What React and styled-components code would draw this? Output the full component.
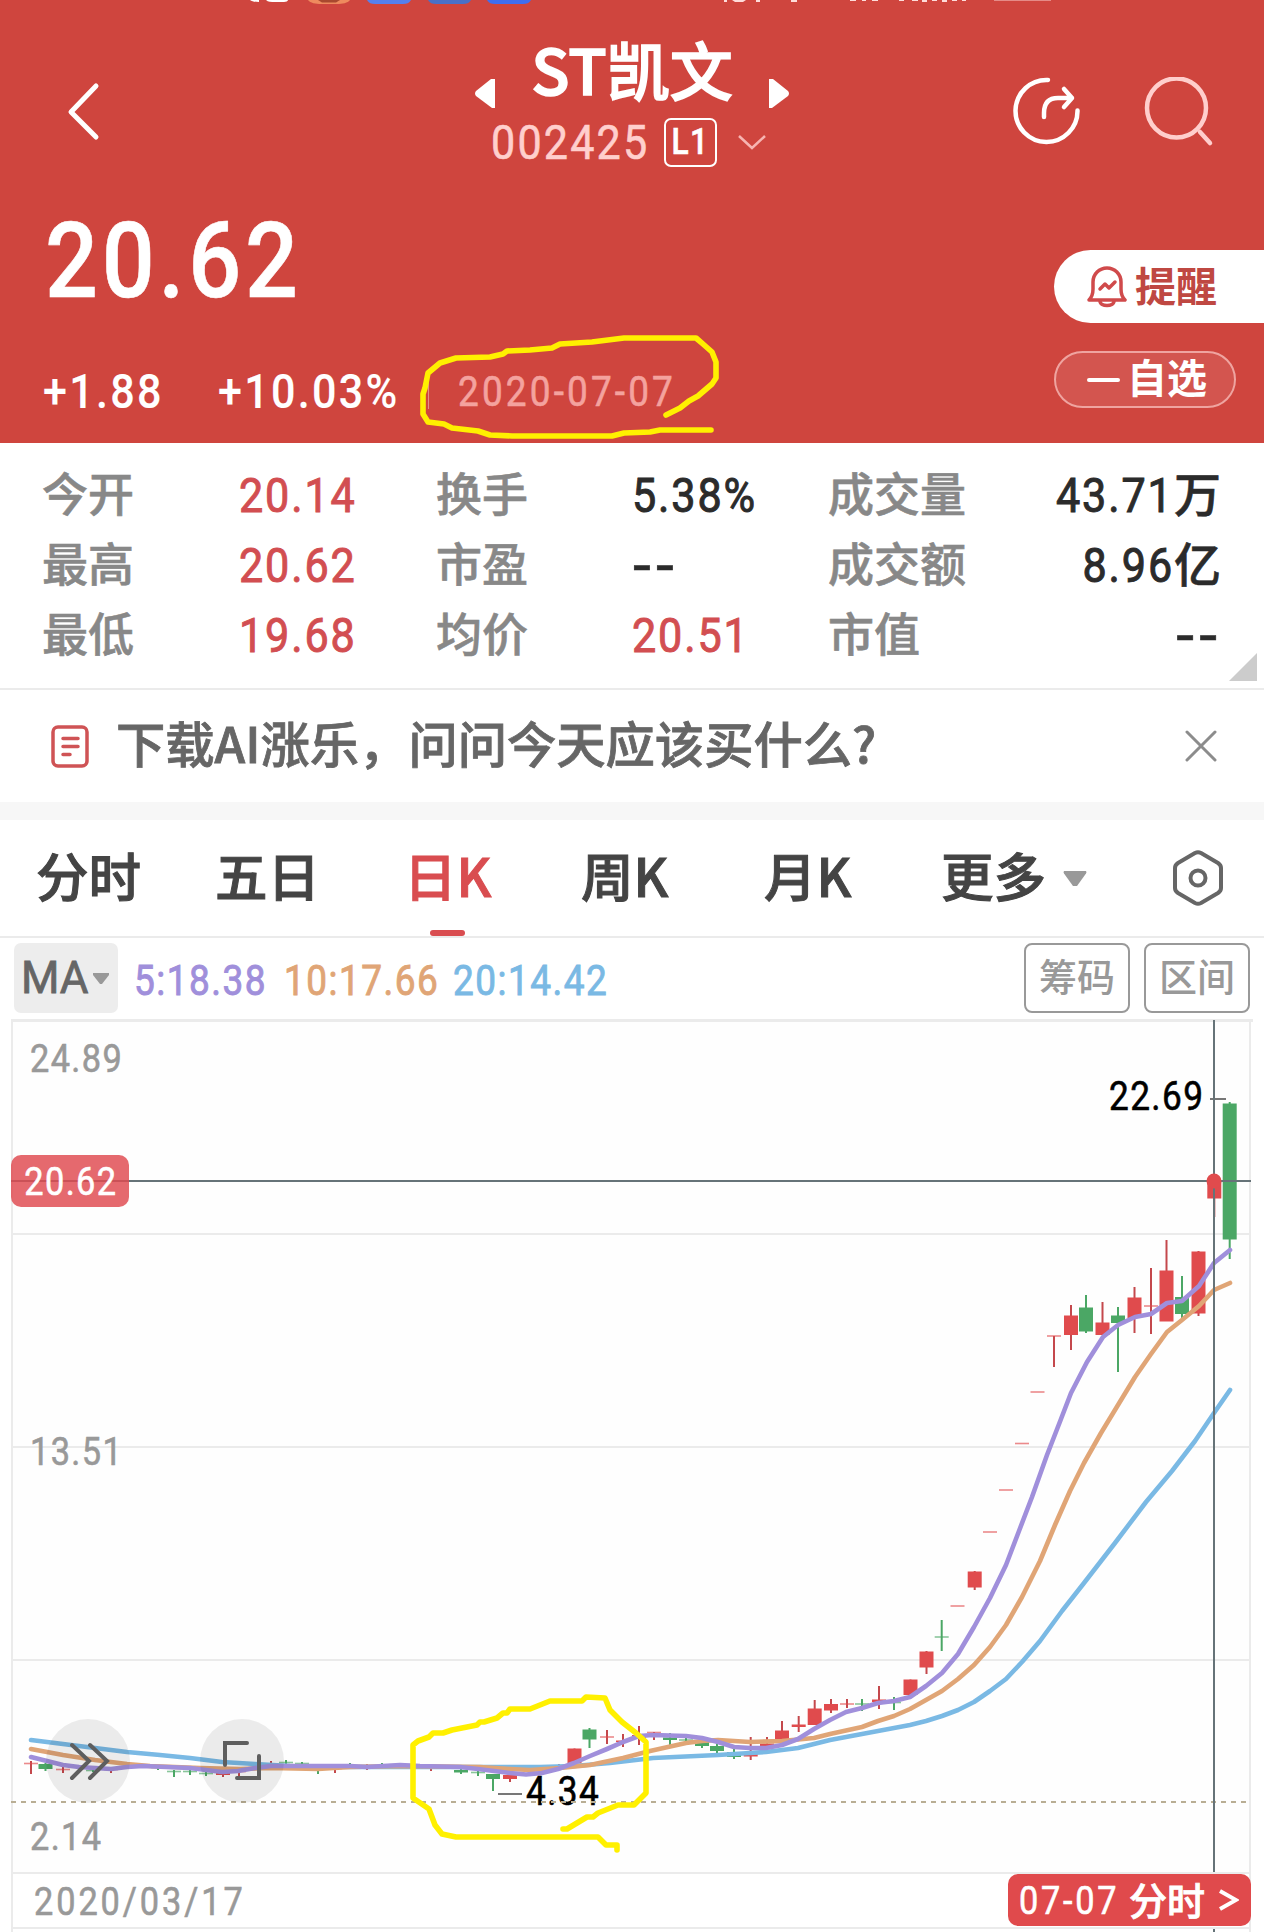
import styled, { createGlobalStyle } from "styled-components";

const GlobalStyle = createGlobalStyle`
    * {
        box-sizing: border-box;
    }
    body {
        margin: 0;
        background: #fff;
        font-family: "Noto Sans CJK SC", "Noto Sans", sans-serif;
    }
    svg {
        display: block;
        flex: none;
    }
`;

const RED = "#e04b4d";
const GREEN = "#4ba765";

const stats = [
    [
        { label: "今开", value: "20.14", up: true },
        { label: "换手", value: "5.38%" },
        { label: "成交量", value: "43.71", unit: "万" },
    ],
    [
        { label: "最高", value: "20.62", up: true },
        { label: "市盈", value: "--" },
        { label: "成交额", value: "8.96", unit: "亿" },
    ],
    [
        { label: "最低", value: "19.68", up: true },
        { label: "均价", value: "20.51", up: true },
        { label: "市值", value: "--" },
    ],
];

const tabs = ["分时", "五日", "日K", "周K", "月K", "更多"];

// x, body top, body bottom, wick top, wick bottom, 1 = up
const candles = [
    [31, 1763, 1764, 1761, 1774, 1],
    [45.5, 1764, 1769, 1763, 1771, 0],
    [63, 1769, 1770, 1767, 1773, 1],
    [93, 1770, 1771, 1769, 1772, 0],
    [111, 1769, 1769, 1768, 1773, 1],
    [158, 1767, 1767, 1767, 1770, 0],
    [174, 1771, 1772, 1770, 1777, 0],
    [190, 1771, 1772, 1770, 1775, 0],
    [206, 1773, 1774, 1772, 1776, 0],
    [223, 1773, 1775, 1772, 1777, 1],
    [239, 1771, 1772, 1771, 1776, 1],
    [271, 1765, 1766, 1761, 1766, 1],
    [286, 1762, 1763, 1760, 1764, 0],
    [302, 1763, 1764, 1762, 1765, 0],
    [318, 1768, 1769, 1769, 1774, 0],
    [335, 1768, 1769, 1769, 1773, 1],
    [350, 1766, 1767, 1763, 1767, 0],
    [367, 1766, 1767, 1764, 1770, 1],
    [382, 1766, 1767, 1763, 1767, 0],
    [431, 1767, 1768, 1767, 1771, 1],
    [461, 1770, 1772.5, 1769, 1774, 0],
    [478, 1772, 1773, 1771, 1776, 0],
    [493, 1774, 1779, 1774, 1791, 0],
    [510, 1775, 1779, 1774, 1782, 1],
    [559, 1767, 1768, 1764, 1768, 1],
    [574.5, 1748.5, 1763.5, 1748.5, 1763.5, 1],
    [589.5, 1729.5, 1739.5, 1728, 1748, 0],
    [607, 1736.5, 1737.5, 1730, 1744, 1],
    [623, 1740.5, 1742, 1734, 1747, 1],
    [639, 1735, 1739, 1726, 1745, 1],
    [654, 1732, 1733, 1732, 1740, 1],
    [670, 1737.5, 1740, 1733, 1745, 0],
    [686, 1739.5, 1740.5, 1738, 1742, 0],
    [702, 1742, 1746, 1742, 1748, 0],
    [717, 1746, 1751, 1744, 1754, 0],
    [734, 1752, 1757, 1749, 1759, 0],
    [750.7, 1754, 1756.5, 1737, 1760, 1],
    [767, 1743.5, 1746, 1737, 1747, 1],
    [782, 1730.5, 1740, 1721, 1740, 1],
    [798.7, 1724.5, 1727, 1716, 1732, 1],
    [814.7, 1708.5, 1725, 1700, 1725, 1],
    [831, 1704, 1710.5, 1699, 1713, 1],
    [847, 1703.5, 1704.5, 1699, 1708, 1],
    [862, 1703.5, 1704.5, 1699, 1711, 0],
    [879, 1699.5, 1702, 1686, 1709, 1],
    [894, 1702, 1703, 1697, 1710, 0],
    [910.5, 1679.5, 1695, 1679.5, 1695, 1],
    [926.5, 1651.5, 1667.5, 1651, 1674, 1],
    [941.7, 1636.5, 1637.5, 1620, 1651, 0],
    [957.5, 1605.5, 1606.5, 1606, 1606, 1],
    [974.7, 1571.5, 1587.5, 1571, 1590, 1],
    [990, 1531.5, 1532.5, 1532, 1532, 1],
    [1006, 1489.5, 1490.5, 1490, 1490, 1],
    [1022, 1443, 1444, 1443, 1443, 1],
    [1037.5, 1391.5, 1392.5, 1392, 1392, 1],
    [1054, 1335.5, 1336.5, 1336, 1367, 1],
    [1071, 1315.5, 1335, 1305, 1350, 1],
    [1086, 1307.5, 1331.5, 1295, 1333, 0],
    [1102.5, 1322.5, 1335, 1302, 1335, 1],
    [1118, 1315.5, 1323, 1307, 1372, 0],
    [1134.5, 1297.5, 1318, 1287, 1333, 1],
    [1151, 1305.5, 1306.5, 1268, 1334, 1],
    [1166.5, 1270.5, 1321.5, 1240, 1321, 1],
    [1182, 1297, 1314, 1276, 1318, 0],
    [1198.5, 1251.5, 1313.5, 1251, 1316, 1],
    [1214.3, 1180, 1198.5, 1180, 1217, 1],
    [1229.7, 1103.5, 1239.5, 1102, 1259, 0],
];

const averages = [
    {
        color: "#7ab9e4",
        points:
            "31,1740 63,1744 95,1748 127,1752 160,1755 190,1758 222,1762 255,1764 290,1766 350,1767 400,1767 480,1767 540,1767 574,1766 610,1763 653,1758 718,1755 750,1753 766,1752 798,1748 814,1744 830,1740 862,1734 910,1725 926,1721 942,1716 958,1710 974,1702 990,1691 1006,1679 1022,1662 1040,1641 1062,1611 1084,1583 1115,1543 1146,1502 1172,1471 1195,1441 1214,1413 1230,1390",
    },
    {
        color: "#e0a576",
        points:
            "31,1749 47,1752 63,1755 95,1760 127,1764 150,1766 200,1768 240,1769 271,1768 318,1769 350,1767 400,1766 480,1767 510,1769 530,1770 560,1768 590,1765 623,1758 650,1751 686,1743 702,1741 718,1740 750,1742 782,1741 814,1738 830,1734 862,1727 878,1721 894,1716 910,1709 926,1700 942,1691 958,1679 974,1665 990,1647 1006,1625 1022,1597 1040,1561 1055,1525 1070,1491 1084,1463 1101,1433 1118,1405 1135,1377 1151,1354 1167,1332 1182,1320 1199,1306 1214,1290 1230,1283",
    },
    {
        color: "#a08fdb",
        points:
            "31,1757 47,1761 63,1765 79,1767 95,1768 111,1769 127,1767 143,1766 190,1768 206,1770 222,1772 238,1771 255,1768 271,1766 300,1766 350,1766 367,1767 383,1766 400,1765 420,1766 460,1767 478,1769 494,1771 510,1773 526,1774.5 542,1773 558,1769 574,1763 590,1756 607,1749 623,1742 639,1736 653,1735 686,1736 702,1738 718,1742 734,1747 750,1748 766,1748 782,1745 798,1739 814,1729 830,1720 846,1712 862,1708 878,1703 894,1701 910,1697 926,1686 942,1673 958,1654 974,1627 990,1598 1006,1565 1019,1531 1032,1497 1047,1455 1061,1419 1071,1393 1087,1362 1103,1337 1118,1325 1135,1317 1151,1314 1167,1303 1182,1301 1199,1286 1214,1263 1230,1250",
    },
];

const ChartText = ({ x, y, size = 39, fill = "#999", spacing, children }) => (
    <ChartLabel transform={`translate(${x} ${y}) scale(0.88 1)`} fontSize={size} fill={fill} stroke={fill} $spacing={spacing}>
        {children}
    </ChartLabel>
);

const Candle = ({ x, top, bottom, high, low, up }) => {
    const color = up ? RED : GREEN;
    const flat = bottom - top <= 1;
    return (
        <g>
            {low > high && (
                <line x1={x} x2={x} y1={high} y2={low} stroke={up ? "#c4484c" : GREEN} strokeWidth="2" />
            )}
            <rect
                x={x - 7}
                y={flat ? top - 0.3 : top}
                width="14"
                height={flat ? 1.6 : bottom - top}
                fill={color}
                opacity={flat ? 0.65 : 1}
            />
        </g>
    );
};

const KLineChart = () => (
    <svg width="1264" height="913" viewBox="0 1019 1264 913">
        <rect x="12" y="1020" width="1239" height="852" fill="#fefefe" />
        <g stroke="#ebebeb" strokeWidth="2">
            <line x1="11" x2="1253" y1="1020.5" y2="1020.5" strokeWidth="3" />
            <line x1="12" x2="12" y1="1019" y2="1932" />
            <line x1="1250" x2="1250" y1="1019" y2="1932" />
            <line x1="12" x2="1250" y1="1234" y2="1234" />
            <line x1="12" x2="1250" y1="1447" y2="1447" />
            <line x1="12" x2="1250" y1="1660" y2="1660" />
            <line x1="12" x2="1250" y1="1873" y2="1873" />
            <line x1="12" x2="1250" y1="1928" y2="1928" />
        </g>
        <ChartText x={30} y={1072}>24.89</ChartText>
        <ChartText x={30} y={1465}>13.51</ChartText>
        <ChartText x={30} y={1850}>2.14</ChartText>
        <ChartText x={34} y={1915} spacing="0.085em">2020/03/17</ChartText>
        {candles.map(([x, top, bottom, high, low, up]) => (
            <Candle key={x} x={x} top={top} bottom={bottom} high={high} low={low} up={up} />
        ))}
        {averages.map((line) => (
            <polyline
                key={line.color}
                points={line.points}
                fill="none"
                stroke={line.color}
                strokeWidth="4.600"
                strokeLinecap="round"
                strokeLinejoin="round"
            />
        ))}
        <ChartText x={1109} y={1110} fill="#000" size={40}>22.69</ChartText>
        <line x1="1210" x2="1226" y1="1099" y2="1099" stroke="#777" strokeWidth="2" />
        <ChartText x={526} y={1805} fill="#000" size={40}>4.34</ChartText>
        <line x1="498" x2="522" y1="1794" y2="1794" stroke="#777" strokeWidth="2" />
        <line x1="11" x2="1251" y1="1802" y2="1802" stroke="#b9ae94" strokeWidth="2" strokeDasharray="5 5" />
        <line x1="11" x2="1251" y1="1181" y2="1181" stroke="#667378" strokeWidth="2" />
        <line x1="1214" x2="1214" y1="1020" y2="1872" stroke="#667378" strokeWidth="2" />
        <line x1="1214" x2="1214" y1="1929" y2="1932" stroke="#667378" strokeWidth="2" />
        <circle cx="1214" cy="1181" r="7.500" fill={RED} />
    </svg>
);

const App = () => (
    <Page>
        <GlobalStyle />
        <Header>
            <StatusStrip>
                <svg width="1264" height="4" viewBox="0 0 1264 4">
                    <path d="M250 0c2 1.500 5 2 9 2V0zM266 0c2 2 5 2 9 2h9c2 0 4-1 4-2z" fill="#fff" />
                    <path d="M308 0c2 3 8 4 13 4h16c5 0 11-1 13-4z" fill="#ee8a5e" />
                    <path d="M318 0h22l-4 2.500h-14z" fill="#a8482f" />
                    <path d="M367 0c2 3 4 4 8 4h28c4 0 6-1 8-4z" fill="#5580ee" />
                    <path d="M428 0c2 3 4 4 8 4h27c4 0 6-1 8-4z" fill="#4a70c8" />
                    <path d="M487 0c2 3 4 4 8 4h28c4 0 6-1 8-4z" fill="#3f6ef0" />
                    <path
                        d="M724 0h3v2h-3zM732 0h14l-3 2h-8zM756 0h4v2h-4zM791 0h6v2h-6zM850 0h6v1h-6zM862 0h4v1h-4zM872 0h6v1h-6zM899 0h5v1h-5zM912 0h6v1h-6zM922 0h5v2h-5zM932 0h5v1h-5zM942 0h5v2h-5zM952 0h5v1h-5zM962 0h4v1h-4z"
                        fill="#ffdcda"
                    />
                    <rect x="994" y="0" width="57" height="1" fill="#e58b87" />
                </svg>
            </StatusStrip>
            <TopBar>
                <BackButton>
                    <svg width="36" height="60" viewBox="0 0 36 60" fill="none" stroke="#fff" strokeWidth="5" strokeLinecap="round" strokeLinejoin="round">
                        <path d="M30 4 5 30l25 25" />
                    </svg>
                </BackButton>
                <TitleBlock>
                    <TitleRow>
                        <Arrow width="20" height="29" viewBox="0 0 20 29">
                            <path d="M20 0v29h-3L1 17q-2-2.500 0-5L16 0z" fill="#fff" />
                        </Arrow>
                        <Title>ST凯文</Title>
                        <Arrow width="20" height="29" viewBox="0 0 20 29">
                            <path d="M0 0v29h3l16-12q2-2.500 0-5L4 0z" fill="#fff" />
                        </Arrow>
                    </TitleRow>
                    <CodeRow>
                        <Code>002425</Code>
                        <Level>
                            <Num $size={36} $weight={500} $origin="center">L1</Num>
                        </Level>
                        <svg width="28" height="16" viewBox="0 0 28 16" fill="none" stroke="#f7b4b1" strokeWidth="2.500">
                            <path d="m1 2 13 12L27 2" />
                        </svg>
                    </CodeRow>
                </TitleBlock>
                <TopActions>
                    <svg width="70" height="70" viewBox="0 0 70 70" fill="none" stroke="#fff" strokeWidth="4.500" strokeLinecap="round" strokeLinejoin="round">
                        <path d="M36 3A31 31 0 1 0 65.500 33.500" />
                        <path d="M32 40v-4q0-15 14-15h14M52 12l8 9-8 9" />
                    </svg>
                    <svg width="72" height="72" viewBox="0 0 72 72" fill="none" stroke="#ffcecc" strokeWidth="4.500" strokeLinecap="round">
                        <circle cx="32.500" cy="31" r="29.500" />
                        <path d="m56 55 10 11" />
                    </svg>
                </TopActions>
            </TopBar>
            <Quote>
                <div>
                    <Price>
                        <Num $size={106} $weight={500}>20.62</Num>
                    </Price>
                    <ChangeRow>
                        <Change $width={175}>+1.88</Change>
                        <Change $width={210}>+10.03%</Change>
                        <DateCell>
                            <Num $size={42} $color="#f4a29e" $spacing="0.085em">2020-07-07</Num>
                        </DateCell>
                    </ChangeRow>
                </div>
                <QuoteActions>
                    <RemindButton>
                        <svg width="40" height="42" viewBox="0 0 40 42" fill="none" stroke="#d04a4b" strokeWidth="3.500" strokeLinejoin="round" strokeLinecap="round">
                            <path d="M2 34c3-3 4-6 4-11v-7a14 14 0 0 1 28 0v7c0 5 1 8 4 11z" />
                            <path d="M13 35c0 6 14 6 14 0M13 23l5-5 4 4 6-6" />
                        </svg>
                        提醒
                    </RemindButton>
                    <WatchButton>
                        <Minus />
                        自选
                    </WatchButton>
                </QuoteActions>
            </Quote>
        </Header>
        <Stats>
            {stats.map((row) => (
                <StatsRow key={row[0].label}>
                    {row.map((cell, i) => [
                        <Label key={cell.label}>{cell.label}</Label>,
                        <Value key={cell.label + "v"} $right={i === 2}>
                            {cell.value === "--" ? (
                                <Dashes $origin={i === 2 ? "right" : "left"}>{cell.value}</Dashes>
                            ) : (
                                <Num
                                    $size={49}
                                    $color={cell.up ? "#d24e51" : "#2b2b2b"}
                                    $origin={i === 2 ? "right" : "left"}
                                    $spacing="0.043em"
                                    $stroke={1}
                                >
                                    {cell.value}
                                </Num>
                            )}
                            {cell.unit}
                        </Value>,
                    ])}
                </StatsRow>
            ))}
            <Corner />
        </Stats>
        <Banner>
            <svg width="38" height="43" viewBox="0 0 38 43" fill="none" stroke="#cf5355" strokeWidth="3.500" strokeLinecap="round">
                <rect x="2" y="2" width="34" height="39" rx="5" />
                <path d="M12 13.500h15M12 21.500h15M12 29.500h7" />
            </svg>
            <BannerText>下载AI涨乐，问问今天应该买什么?</BannerText>
            <svg width="32" height="32" viewBox="0 0 32 32" stroke="#8c8c8c" strokeWidth="3" strokeLinecap="round">
                <path d="m2 2 28 28M30 2 2 30" />
            </svg>
        </Banner>
        <Tabs>
            {tabs.map((tab) => (
                <Tab key={tab} $active={tab === "日K"}>
                    {tab}
                    {tab === "更多" && (
                        <svg width="24" height="16" viewBox="0 0 24 16">
                            <path d="M1 0h22q1 1 0 2.500L14 15h-4L1 2.500Q0 1 1 0z" fill="#999" />
                        </svg>
                    )}
                </Tab>
            ))}
            <svg width="50" height="56" viewBox="0 0 50 56" fill="none" stroke="#666" strokeWidth="4" strokeLinejoin="round">
                <path d="M22 3q3-1.500 6 0l17 10q3 2 3 5v20q0 3-3 5L28 53q-3 1.500-6 0L5 43q-3-2-3-5V18q0-3 3-5z" />
                <circle cx="25" cy="28" r="7.500" />
            </svg>
        </Tabs>
        <IndicatorBar>
            <IndicatorSelect>
                MA
                <svg width="16" height="11" viewBox="0 0 16 11">
                    <path d="M0 0h16v2L9 11H7L0 2z" fill="#999" />
                </svg>
            </IndicatorSelect>
            <Average $width={150} $color="#a08fdb">5:18.38</Average>
            <Average $width={169} $color="#e0a576">10:17.66</Average>
            <Average $width={170} $color="#7ab9e4">20:14.42</Average>
            <RangeButtons>
                <RangeButton>筹码</RangeButton>
                <RangeButton>区间</RangeButton>
            </RangeButtons>
        </IndicatorBar>
        <ChartArea>
            <KLineChart />
            <PriceTag>
                <Num $size={39} $origin="center">20.62</Num>
            </PriceTag>
            <RoundButton $left={46}>
                <svg width="84" height="84" viewBox="46 1719 84 84" fill="none" stroke="#5e5e5e" strokeWidth="4" strokeLinecap="round">
                    <path d="m72 1745 17 16-17 17M90 1745l17 16-17 17" />
                </svg>
            </RoundButton>
            <RoundButton $left={200}>
                <svg width="84" height="84" viewBox="200 1719 84 84" fill="none" stroke="#5e5e5e" strokeWidth="4" strokeLinecap="round">
                    <path d="M225 1765v-22h22M259 1756v22h-22" />
                </svg>
            </RoundButton>
            <DayBadge>
                <Num $size={39} $spacing="0.08em">07-07</Num>
                <BadgeText>分时</BadgeText>
                <svg width="20" height="22" viewBox="0 0 20 22" fill="none" stroke="#fff" strokeWidth="4">
                    <path d="m1 2 16 9-16 9" />
                </svg>
            </DayBadge>
        </ChartArea>
        <Marks width="1264" height="1932" viewBox="0 0 1264 1932">
            <polyline points="666,415 680,408 689,401 698,396 712,384 716,378 716,362 712,352 703,344 696,338 624,338 592,342 560,344 552,348 530,350 507,351 503,354 490,357 456,358 440,363 428,373 425,388 423,394 423,414 428,422 444,424 452,428 478,431 490,435 512,436 612,436 624,433 650,432 660,430 711,430" />
            <polyline points="563,1829 567,1829 587,1817 593,1817 598,1813 618,1805 634,1805 646,1793 646,1742 636,1733 622,1722 610,1710 605,1698 586,1697 582,1701 550,1701 530,1709 510,1709 507,1713 503,1713 497,1718 484,1722 480,1722 477,1725 452,1730 443,1733 433,1733 429,1737 418,1741 413,1745 413,1798 429,1809 435,1825 442,1834 456,1837 598,1837 606,1845 617,1845 617,1850" />
        </Marks>
    </Page>
);

const Page = styled.div`
    position: relative;
    display: flex;
    flex-direction: column;
    width: 1264px;
    height: 1932px;
    overflow: hidden;
    background: #fff;
`;
// condensed figures, a bit tighter than the family's own width
const Num = styled.span`
    display: inline-block;
    font-family: Roboto, "Noto Sans", sans-serif;
    font-size: ${(p) => p.$size}px;
    font-weight: ${(p) => p.$weight || 400};
    line-height: 1;
    letter-spacing: ${(p) => p.$spacing || "0.04em"};
    color: ${(p) => p.$color || "inherit"};
    white-space: nowrap;
    transform: scaleX(0.88);
    transform-origin: ${(p) => p.$origin || "left"};
    -webkit-text-stroke: ${(p) => p.$stroke || 0.6}px currentColor;
`;
const Dashes = styled(Num).attrs({ $size: 49, $weight: 500, $spacing: "0.05em" })`
    transform: scaleX(1.2);
`;
const ChartLabel = styled.text`
    font-family: Roboto, "Noto Sans", sans-serif;
    letter-spacing: ${(p) => p.$spacing || "0.04em"};
    stroke-width: 0.6px;
`;
const Header = styled.header`
    height: 443px;
    background: #cf453e;
    color: #fff;
`;
const StatusStrip = styled.div`
    height: 33px;
`;
const TopBar = styled.div`
    display: flex;
    justify-content: space-between;
    height: 150px;
`;
const BackButton = styled.div`
    width: 475px;
    padding: 49px 0 0 66px;
`;
const TitleBlock = styled.div`
    width: 314px;
`;
const TitleRow = styled.div`
    display: flex;
    justify-content: space-between;
    height: 70px;
`;
const Arrow = styled.svg`
    margin-top: 46px;
`;
const Title = styled.h1`
    margin: 0;
    font-size: 63px;
    font-weight: 500;
    line-height: 70px;
    white-space: nowrap;
    -webkit-text-stroke: 1.6px currentColor;
`;
const CodeRow = styled.div`
    display: flex;
    align-items: center;
    height: 78px;
    padding-left: 16px;
`;
const Code = styled(Num).attrs({ $size: 49, $color: "#ffcfcd", $spacing: "0.05em" })`
    width: 173px;
`;
const Level = styled.div`
    display: flex;
    align-items: center;
    justify-content: center;
    width: 53px;
    height: 49px;
    margin-right: 21px;
    border: 2px solid #fff;
    border-radius: 7px;
`;
const TopActions = styled.div`
    display: flex;
    gap: 62px;
    width: 475px;
    padding: 44px 0 0 223px;
`;
const Quote = styled.div`
    display: flex;
    justify-content: space-between;
    height: 260px;
`;
const Price = styled.div`
    display: flex;
    align-items: center;
    height: 156px;
    padding-left: 45px;
`;
const ChangeRow = styled.div`
    display: flex;
    align-items: center;
    height: 104px;
    padding-left: 43px;
`;
const Change = styled(Num).attrs({ $size: 49, $weight: 500, $spacing: "0.052em", $stroke: 0.1 })`
    width: ${(p) => p.$width}px;
`;
const DateCell = styled.div`
    display: flex;
    align-items: center;
    height: 36px;
    padding: 2px 0 0 29px;
    border-left: 1px solid #e58b87;
`;
const QuoteActions = styled.div`
    display: flex;
    flex-direction: column;
    gap: 28px;
    width: 210px;
    padding-top: 67px;
`;
const RemindButton = styled.div`
    display: flex;
    align-items: center;
    gap: 8px;
    height: 73px;
    padding: 0 0 5px 33px;
    border-radius: 37px 0 0 37px;
    background: #fff;
    color: #bf4842;
    font-size: 41px;
    font-weight: 700;
    line-height: 60px;
    svg {
        margin-top: 6px;
    }
`;
const WatchButton = styled.div`
    display: flex;
    align-items: center;
    gap: 7px;
    width: 182px;
    height: 57px;
    padding: 0 0 7px 31px;
    border: 2px solid #efa4a0;
    border-radius: 29px;
    background: rgba(255, 255, 255, 0.09);
    font-size: 40px;
    font-weight: 700;
    line-height: 50px;
`;
const Minus = styled.span`
    width: 33px;
    height: 4px;
    margin-top: 7px;
    border-radius: 2px;
    background: #fff;
`;
const Stats = styled.section`
    position: relative;
    height: 247px;
    padding: 16px 43px 0 42px;
    border-bottom: 2px solid #ebebeb;
`;
const StatsRow = styled.div`
    display: grid;
    grid-template-columns: 197px 197px 196px 196px 160px 1fr;
    align-items: center;
    height: 70px;
`;
const Label = styled.span`
    padding-bottom: 7px;
    color: #888;
    font-size: 46px;
    font-weight: 500;
    line-height: 60px;
    -webkit-text-stroke: 0.6px currentColor;
`;
const Value = styled.span`
    padding-bottom: 5px;
    color: #2b2b2b;
    font-size: 47px;
    font-weight: 500;
    line-height: 60px;
    white-space: nowrap;
    text-align: ${(p) => (p.$right ? "right" : "left")};
    -webkit-text-stroke: 0.6px currentColor;
`;
const Corner = styled.span`
    position: absolute;
    right: 7px;
    bottom: 7px;
    border-bottom: 28px solid #ccc;
    border-left: 28px solid transparent;
`;
const Banner = styled.section`
    display: flex;
    align-items: center;
    height: 130px;
    padding: 0 47px 0 51px;
    border-bottom: 18px solid #f7f7f7;
`;
const BannerText = styled.p`
    flex: 1;
    margin: 0;
    padding: 0 0 8px 27px;
    color: #666;
    font-size: 49.3px;
    font-weight: 500;
    line-height: 60px;
    -webkit-text-stroke: 0.8px currentColor;
`;
const Tabs = styled.nav`
    display: grid;
    grid-template-columns: 179px 189px 177px 183px 177px 232px 50px;
    align-items: center;
    height: 118px;
    padding-left: 36px;
    border-bottom: 2px solid #ebebeb;
`;
const Tab = styled.div`
    position: relative;
    display: flex;
    align-items: center;
    gap: 17px;
    height: 116px;
    padding-bottom: 8px;
    color: ${(p) => (p.$active ? "#d94d50" : "#444")};
    font-size: 52.5px;
    font-weight: 500;
    -webkit-text-stroke: 1px currentColor;
    svg {
        margin-top: 10px;
    }
    &::after {
        content: "";
        position: absolute;
        display: ${(p) => (p.$active ? "block" : "none")};
        left: 26px;
        bottom: 0;
        width: 35px;
        height: 6px;
        border-radius: 3px;
        background: #d94d50;
    }
`;
const IndicatorBar = styled.section`
    display: flex;
    align-items: flex-start;
    height: 81px;
    padding: 5px 14px 0;
`;
const IndicatorSelect = styled.div`
    display: flex;
    align-items: center;
    gap: 4px;
    width: 104px;
    height: 70px;
    margin-right: 16px;
    padding-left: 7px;
    border-radius: 7px;
    background: #ededed;
    color: #666;
    font-family: Roboto, sans-serif;
    font-size: 44px;
    -webkit-text-stroke: 0.8px currentColor;
`;
const Average = styled(Num).attrs({ $size: 42, $stroke: 0.9 })`
    width: ${(p) => p.$width}px;
    line-height: 75px;
`;
const RangeButtons = styled.div`
    display: flex;
    gap: 14px;
    margin-left: auto;
`;
const RangeButton = styled.div`
    width: 106px;
    height: 70px;
    border: 2px solid #999;
    border-radius: 8px;
    color: #999;
    font-size: 38px;
    font-weight: 500;
    line-height: 60px;
    text-align: center;
`;
const ChartArea = styled.section`
    position: relative;
    height: 913px;
`;
const PriceTag = styled.div`
    position: absolute;
    left: 11px;
    top: 136px;
    display: flex;
    align-items: center;
    justify-content: center;
    width: 118px;
    height: 52px;
    padding: 3px 0 0 2px;
    border-radius: 10px;
    background: rgba(224, 75, 80, 0.83);
    color: #fff;
`;
const RoundButton = styled.div`
    position: absolute;
    left: ${(p) => p.$left}px;
    top: 700px;
    width: 84px;
    height: 84px;
    border-radius: 50%;
    background: rgba(0, 0, 0, 0.075);
`;
const DayBadge = styled.div`
    position: absolute;
    left: 1008px;
    top: 855px;
    display: flex;
    align-items: center;
    width: 243px;
    height: 52px;
    padding-left: 11px;
    border-radius: 10px;
    background: #e04a4c;
    color: #fff;
    ${Num} {
        width: 110px;
        margin-top: 3px;
    }
`;
const BadgeText = styled.span`
    width: 90px;
    padding-bottom: 3px;
    font-size: 38px;
    font-weight: 500;
    line-height: 46px;
    -webkit-text-stroke: 0.8px currentColor;
`;
const Marks = styled.svg`
    position: absolute;
    left: 0;
    top: 0;
    pointer-events: none;
    polyline {
        fill: none;
        stroke: #fff000;
        stroke-width: 5.6px;
        stroke-linecap: round;
        stroke-linejoin: round;
    }
`;

export default App;
